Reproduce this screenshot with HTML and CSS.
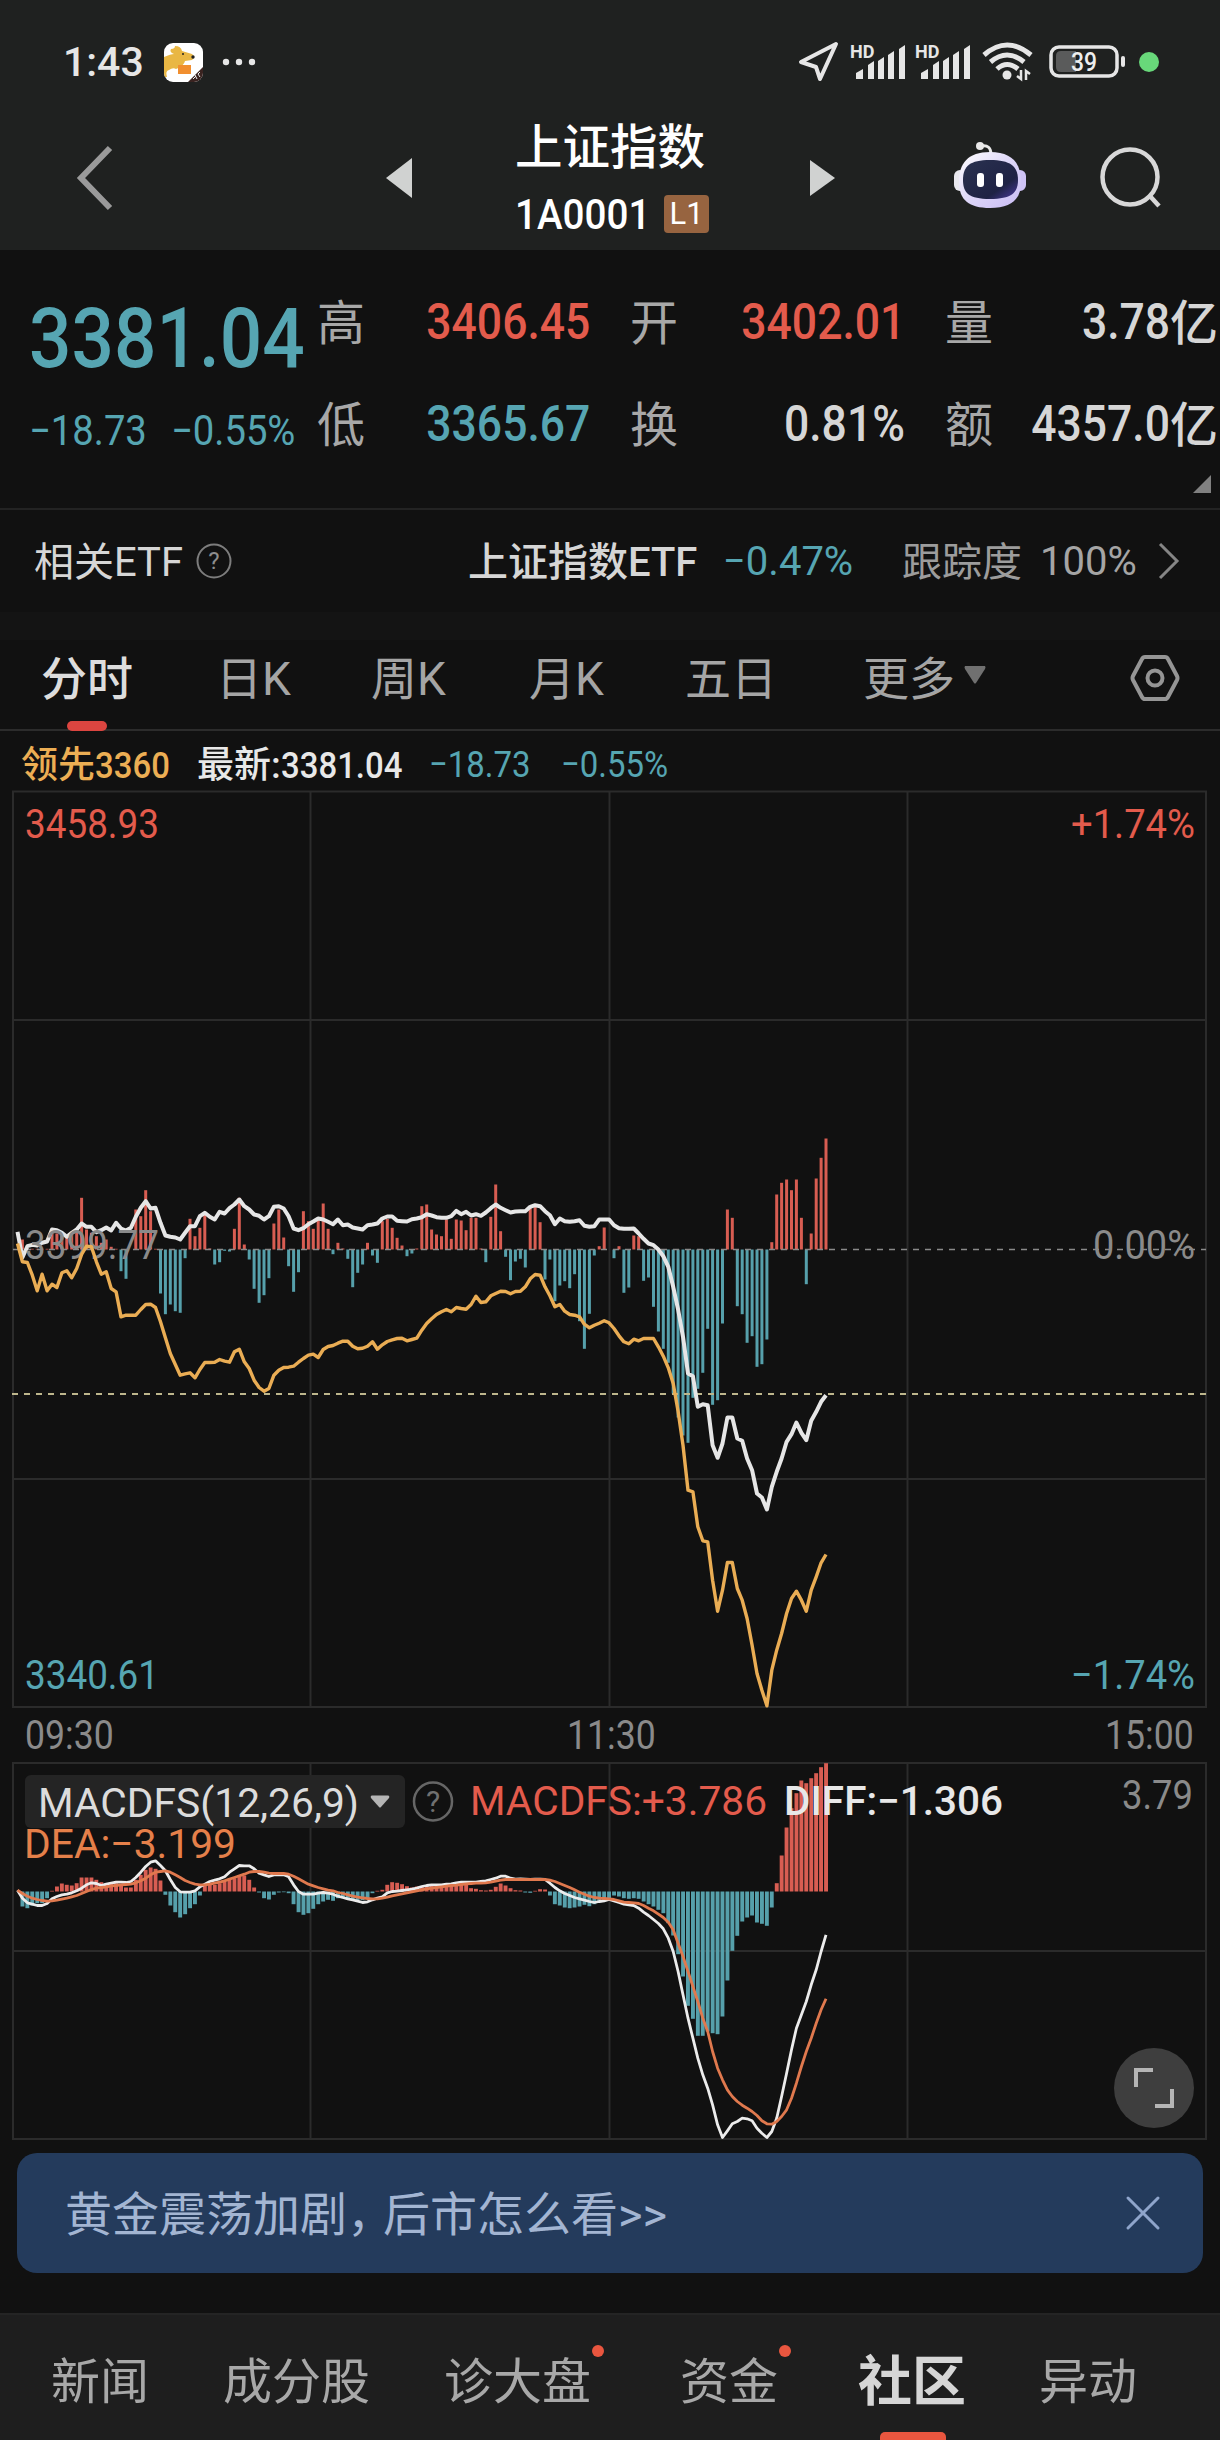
FILE: index.html
```html
<!DOCTYPE html>
<html lang="zh-CN">
  <head>
    <meta charset="UTF-8" />
    <meta name="viewport" content="width=device-width, initial-scale=1.0" />
    <title>上证指数</title>
    <link rel="stylesheet" href="styles.css">
  </head>
  <body>
    <header class="header">
      <div class="status">
        <span class="time">1:43</span>
        <svg class="app-icon" width="39" height="39" viewBox="0 0 39 39">
          <defs><clipPath id="appClip"><rect width="39" height="39" rx="9" /></clipPath></defs>
          <g clip-path="url(#appClip)">
            <rect width="39" height="39" fill="#fff" />
            <path d="M0 14 Q7 11 10 11 Q5 9 7 6 Q11 6 11 3 Q17 3 18 8 L28 11 Q32 14 28 17 L21 18 Q20 23 12 26 Q9 24 5 27 Q1 28 3 34 L0 34 Z" fill="#e9b744" />
            <circle cx="19" cy="11" r="1" fill="#222" />
            <circle cx="29" cy="14" r="1.7" fill="#222" />
            <rect x="14" y="22" width="13" height="9" fill="#f18f2f" />
            <path d="M39 24 L24 39 H39 Z" fill="#3a2320" />
            <path d="M29 36 l3-3 m1 3 l-2-4 m3-1 l2 3 m0-5 l-2 2" stroke="#eee" stroke-width="1" fill="none" />
          </g>
        </svg>
        <svg class="dots" width="34" height="8" viewBox="0 0 34 8" fill="#e6e6e6">
          <circle cx="4" cy="4" r="3.2" /><circle cx="17" cy="4" r="3.2" /><circle cx="30" cy="4" r="3.2" />
        </svg>

        <svg class="location" width="42" height="42" viewBox="0 0 42 42" fill="none" stroke="#e6e6e6" stroke-width="4" stroke-linejoin="round">
          <path d="M38 3 L3 21 L18 26 L22 38 Z" />
        </svg>
        <svg class="signal" width="56" height="38" viewBox="0 0 56 38" fill="#e6e6e6">
          <text x="0" y="15" class="hd">HD</text>
          <path d="M6 36v-6l7-4v10z M18 36V22l6-4v18z M28 36V18l6-4v22z M38 36V12l6-4v28z M49 36V6l6-4v34z" />
        </svg>
        <svg class="signal" width="56" height="38" viewBox="0 0 56 38" fill="#e6e6e6">
          <text x="0" y="15" class="hd">HD</text>
          <path d="M6 36v-6l7-4v10z M18 36V22l6-4v18z M28 36V18l6-4v22z M38 36V12l6-4v28z M49 36V6l6-4v34z" />
        </svg>
        <svg class="wifi" width="52" height="40" viewBox="0 0 52 40" fill="none" stroke="#e6e6e6" stroke-width="5">
          <path d="M2 13 Q25 -7 49 13 M8.500 20 Q25 6 42 20 M15 27 Q25 18 36 27" />
          <circle cx="25" cy="33" r="4.500" fill="#e6e6e6" stroke="none" />
          <path d="M35 34 l4 3 v-9 M48 32 l-4 -3 v9" stroke-width="2.500" />
        </svg>
        <svg class="battery" width="78" height="34" viewBox="0 0 78 34">
          <rect x="2" y="2" width="66" height="29" rx="8" fill="none" stroke="#e6e6e6" stroke-width="3.500" />
          <path d="M12 6 H27 V27 H12 Q7 27 7 22 V11 Q7 6 12 6Z" fill="#5a5b5b" />
          <rect x="72" y="11" width="4" height="11" rx="2" fill="#e6e6e6" />
          <text x="22" y="25.500" class="level" textLength="26" lengthAdjust="spacingAndGlyphs">39</text>
        </svg>
        <span class="privacy-dot"></span>
      </div>

      <div class="nav">
        <svg class="back" width="38" height="66" viewBox="0 0 38 66" fill="none" stroke="#9a9a9a" stroke-width="6">
          <path d="M34 3 L5 33 L34 63" />
        </svg>
        <svg class="prev" width="26" height="40" viewBox="0 0 26 40"><path d="M26 0 V40 L0 20Z" fill="#d0d2d1" /></svg>
        <div class="title">
          <h1>上证指数</h1>
          <div class="code"><span class="num code-num">1A0001</span><span class="badge">L1</span></div>
        </div>
        <svg class="next" width="25" height="36" viewBox="0 0 25 36"><path d="M0 0 V36 L25 18Z" fill="#d0d2d1" /></svg>
        <svg class="robot" width="72" height="68" viewBox="0 0 72 68">
          <defs>
            <linearGradient id="shell" x1="0" y1="0" x2="1" y2="1">
              <stop offset="0" stop-color="#ffffff" /><stop offset=".5" stop-color="#ddd6f8" /><stop offset="1" stop-color="#c9bcf4" />
            </linearGradient>
            <linearGradient id="visor" x1="0" y1="0" x2="1" y2="1">
              <stop offset="0" stop-color="#2a3150" /><stop offset=".7" stop-color="#1f2344" /><stop offset="1" stop-color="#4c3ba0" />
            </linearGradient>
          </defs>
          <path d="M27 5 Q37 3 37 14" fill="none" stroke="#e9e9e9" stroke-width="3" />
          <circle cx="26" cy="5" r="4" fill="#e9e9e9" />
          <rect x="0" y="29" width="12" height="21" rx="6" fill="#e8e8ee" />
          <rect x="60" y="29" width="12" height="21" rx="6" fill="#cfc3f6" />
          <path d="M36 11 C58 11 67 22 67 41 C67 59 57 67 36 67 C15 67 5 59 5 41 C5 22 14 11 36 11Z" fill="url(#shell)" />
          <path d="M36 19 C56 19 64 25 64 39 C64 52 57 58 36 58 C15 58 9 52 9 39 C9 25 16 19 36 19Z" fill="url(#visor)" />
          <rect x="23" y="32" width="7" height="14" rx="3" fill="#fff" />
          <rect x="42" y="32" width="7" height="14" rx="3" fill="#fff" />
        </svg>
        <svg class="search" width="62" height="62" viewBox="0 0 62 62" fill="none" stroke="#d8d8d8" stroke-width="4.500">
          <circle cx="30" cy="30" r="27.500" /><path d="M49 48 L59 59" />
        </svg>
      </div>
    </header>

    <section class="quote">
      <div class="last">
        <div class="num price">3381.04</div>
        <div class="change"><span class="num">−18.73</span><span class="num">−0.55%</span></div>
      </div>
      <div class="stats">
        <div class="stat"><label>高</label><span class="num up">3406.45</span></div>
        <div class="stat"><label>开</label><span class="num up">3402.01</span></div>
        <div class="stat"><label>量</label><span class="num">3.78</span><i>亿</i></div>
        <div class="stat"><label>低</label><span class="num down">3365.67</span></div>
        <div class="stat"><label>换</label><span class="num">0.81%</span></div>
        <div class="stat"><label>额</label><span class="num">4357.0</span><i>亿</i></div>
      </div>
      <span class="corner"></span>
    </section>

    <section class="etf">
      <span class="etf-label">相关ETF</span>
      <svg class="help" width="36" height="36" viewBox="0 0 36 36" fill="none" stroke="#7d7d7d" stroke-width="2">
        <circle cx="18" cy="18" r="16.500" />
        <text x="18" y="26" text-anchor="middle" class="help-text">?</text>
      </svg>
      <span class="etf-name">上证指数ETF</span>
      <span class="etf-change">−0.47%</span>
      <span class="etf-track">跟踪度</span>
      <span class="etf-percent">100%</span>
      <svg class="more" width="22" height="38" viewBox="0 0 22 38" fill="none" stroke="#858585" stroke-width="3"><path d="M2 2 L19 19 L2 36" /></svg>
    </section>

    <nav class="periods">
      <span class="period active">分时</span>
      <span class="period">日K</span>
      <span class="period">周K</span>
      <span class="period">月K</span>
      <span class="period">五日</span>
      <span class="period">更多</span>
      <svg class="caret" width="22" height="18" viewBox="0 0 22 18"><path d="M1 0 H21 Q22 1 21 3 L12 17 Q11 18 10 17 L1 3 Q0 1 1 0Z" fill="#707070" /></svg>
      <svg class="setting" width="50" height="48" viewBox="0 0 50 48" fill="none" stroke="#959595" stroke-width="4">
        <path d="M15 3 H35 Q37 3 38 5 L47 22 Q48 24 47 26 L38 43 Q37 45 35 45 H15 Q13 45 12 43 L3 26 Q2 24 3 22 L12 5 Q13 3 15 3Z" />
        <circle cx="25" cy="24" r="7.500" />
      </svg>
    </nav>

    <div class="legend">
      <span class="lead">领先<b class="num">3360</b></span>
      <span class="latest">最新:<b class="num">3381.04</b></span>
      <span class="num down">−18.73</span>
      <span class="num down">−0.55%</span>
    </div>

    <svg class="chart" id="minuteChart" width="1220" height="918" viewBox="0 790 1220 918">
      <path class="grid" d="M13 791.500H1206V1707H13Z M13 1020H1206 M13 1479H1206 M310.500 791V1707 M609.500 791V1707 M907.500 791V1707" />
      <g id="minuteBars"></g>
      <path class="zero-line" d="M13 1249.500H1206" />
      <path class="last-line" d="M12 1394H1206" />
      <polyline class="line-price" id="priceLine" />
      <g class="axis">
        <text class="up" x="25" y="838" textLength="134">3458.93</text>
        <text class="up" x="1071" y="838" textLength="124">+1.74%</text>
        <text class="mid" x="25" y="1259" textLength="134">3399.77</text>
        <text class="mid" x="1093" y="1259" textLength="102">0.00%</text>
        <text class="down" x="25" y="1689" textLength="134">3340.61</text>
        <text class="down" x="1071" y="1689" textLength="124">−1.74%</text>
      </g>
      <polyline class="line-lead" id="leadLine" />
    </svg>

    <div class="times"><span class="num">09:30</span><span class="num">11:30</span><span class="num">15:00</span></div>

    <div class="macd">
      <svg class="chart" width="1220" height="378" viewBox="0 1762 1220 378">
        <path class="grid" d="M13 1763H1206V2139H13Z M13 1951H1206 M310.500 1763V2139 M609.500 1763V2139 M907.500 1763V2139" />
        <rect x="25" y="1775" width="380" height="53" rx="6" class="select" />
        <g id="macdBars"></g>
        <polyline class="line-diff" id="diffLine" />
        <polyline class="line-dea" id="deaLine" />
        <g class="axis">
          <text x="38" y="1817" class="select-text" textLength="321">MACDFS(12,26,9)</text>
          <path d="M372 1795.500 H388 Q390 1796 389 1798 L381 1807 Q380 1808 379 1807 L371 1798 Q370 1796 372 1795.500Z" fill="#b5b5b5" />
          <circle cx="433" cy="1801.500" r="19" fill="none" stroke="#666" stroke-width="2.500" />
          <text x="433" y="1812" text-anchor="middle" class="macd-help">?</text>
          <text x="470" y="1815" class="up" textLength="297">MACDFS:+3.786</text>
          <text x="784" y="1815" class="diff" textLength="219">DIFF:−1.306</text>
          <text x="24" y="1858" class="dea" textLength="212">DEA:−3.199</text>
          <text x="1122" y="1809" class="mid" textLength="71">3.79</text>
        </g>
      </svg>
      <button class="fullscreen">
        <svg width="44" height="44" viewBox="0 0 44 44" fill="none" stroke="#b5b5b5" stroke-width="4"><path d="M4 21 V4 H21 M40 23 V40 H23" /></svg>
      </button>
    </div>

    <div class="banner">
      <span>黄金震荡加剧<span class="comma">，</span>后市怎么看&gt;&gt;</span>
      <svg width="36" height="36" viewBox="0 0 36 36" fill="none" stroke="#8fa5cb" stroke-width="3" stroke-linecap="round"><path d="M3 3 L33 33 M33 3 L3 33" /></svg>
    </div>

    <nav class="bottom">
      <span>新闻</span>
      <span>成分股</span>
      <span class="dot">诊大盘</span>
      <span class="dot">资金</span>
      <span class="current">社区</span>
      <span>异动</span>
    </nav>

    <script>
      // One value per minute from 09:30, offset from the zero line (3 units = 1px)
      const force = [
        0, 30, 4, 2, 2, 2, 2, 50, 48, 40, 40, 45, 55, 155, 60, 50, 40, 20, 30, 8,
        2, -65, -88, 0, 120, 100, 178, 115, 2, -132, -194, -165, -185, -190, -26, 92, 40, 65, 105, 3,
        -45, -38, -4, -6, 62, 155, 15, -30, -118, -160, -137, -86, 78, 120, 36, -50, -127, -68, 115, 85,
        62, 95, 138, 62, -14, 20, 3, -28, -113, -70, -45, 20, -18, -40, 85, 92, 65, 35, 12, -20,
        -12, 3, 130, 135, 60, 45, 40, 90, 32, 90, 87, 58, 95, 95, 3, -38, 98, 195, 55, -22,
        -92, -36, -28, -54, 125, 128, 82, -90, -30, -155, -108, -95, -116, -74, -215, -298, -193, -18, 10, 66,
        0, -26, 10, -130, -114, 42, 40, -94, -84, -172, -246, -298, -340, -432, -504, -558, -580, -445, -418, -370,
        -238, -466, -452, -222, 120, 95, -170, -194, -280, -260, -352, -344, -270, 22, 165, 200, 210, 178, 210, 95,
        -104, 48, 213, 275, 333
      ];
      const price = [
        53, -24, 10, 14, 12, 20, 24, 60, 58, 50, 38, 50, 60, 78, 68, 68, 52, 58, 66, 57,
        80, 63, 57, 65, 98, 125, 145, 123, 125, 80, 42, 38, 36, 30, 50, 70, 70, 100, 110, 98,
        90, 113, 108, 124, 135, 150, 130, 120, 105, 101, 90, 100, 128, 130, 123, 100, 63, 58, 64, 76,
        84, 93, 90, 83, 76, 90, 73, 75, 66, 63, 60, 73, 75, 78, 93, 99, 99, 86, 85, 84,
        91, 93, 97, 106, 102, 97, 95, 95, 100, 116, 106, 113, 102, 106, 101, 111, 124, 135, 125, 118,
        111, 114, 115, 115, 128, 133, 130, 115, 103, 76, 93, 85, 83, 85, 88, 71, 68, 70, 90, 90,
        90, 73, 64, 62, 62, 63, 48, 32, 18, 13, 0, -20, -52, -112, -180, -262, -372, -380, -472, -464,
        -467, -587, -625, -582, -504, -504, -567, -574, -627, -662, -732, -744, -780, -712, -667, -627, -577, -554, -519, -550,
        -572, -514, -487, -457, -437
      ];
      const lead = [
        18, -37, -39, -77, -124, -74, -124, -104, -114, -70, -64, -85, -57, -15, 10, 8, -37, -74, -67, -117,
        -127, -202, -197, -197, -197, -180, -165, -164, -174, -217, -265, -312, -345, -377, -373, -370, -385, -360, -339, -339,
        -338, -330, -335, -338, -307, -299, -337, -357, -392, -414, -425, -417, -377, -362, -354, -353, -350, -338, -327, -317,
        -314, -324, -300, -291, -288, -281, -275, -275, -290, -298, -296, -290, -277, -299, -286, -276, -271, -267, -266, -274,
        -270, -266, -242, -222, -208, -195, -187, -180, -187, -174, -177, -179, -165, -140, -159, -157, -139, -132, -125, -126,
        -133, -126, -125, -112, -88, -75, -77, -112, -139, -172, -165, -185, -195, -197, -202, -224, -235, -227, -221, -214,
        -220, -237, -259, -277, -283, -269, -274, -267, -267, -267, -292, -320, -355, -402, -485, -587, -722, -727, -832, -874,
        -877, -992, -1085, -1022, -939, -939, -1017, -1052, -1107, -1187, -1272, -1322, -1369, -1262, -1202, -1152, -1092, -1047, -1025, -1052,
        -1085, -1022, -982, -940, -915
      ];
      const macd = [
        0, -45, -50, -42, -35, -35, -20, 2, 15, 24, 20, 18, 25, 42, 42, 42, 35, 28, 25, 25,
        25, 22, 12, 12, 35, 50, 65, 72, 68, 33, -10, -42, -62, -78, -68, -50, -38, -12, 20, 22,
        20, 25, 30, 38, 40, 45, 48, 35, 12, -3, -20, -24, -10, -3, -2, -5, -38, -62, -70, -65,
        -52, -38, -30, -25, -28, -20, -20, -20, -24, -26, -26, -20, -5, 2, 5, 20, 28, 26, 22, 16,
        12, 15, 16, 18, 20, 20, 18, 20, 22, 24, 24, 20, 10, 8, 4, 3, 5, 14, 24, 18,
        10, 4, 3, -3, -4, 2, 7, 6, -12, -38, -42, -48, -50, -48, -45, -40, -44, -38, -30, -28,
        -24, -12, -15, -20, -22, -20, -22, -30, -38, -45, -55, -65, -95, -132, -188, -255, -343, -382, -433, -433,
        -420, -425, -428, -375, -267, -178, -133, -90, -78, -72, -93, -97, -103, -48, 25, 108, 192, 250, 295, 333,
        325, 340, 355, 373, 385
      ];
      const diff = [
        4, -20, -34, -38, -42, -42, -36, -22, -15, -10, -8, -4, 2, 10, 20, 26, 24, 18, 22, 25,
        28, 28, 27, 30, 42, 58, 75, 88, 92, 78, 62, 36, 12, -1, -2, -2, 2, 14, 22, 30,
        34, 38, 44, 58, 68, 78, 77, 77, 68, 55, 50, 45, 50, 50, 50, 44, 20, 0, -8, -8,
        -8, -5, -3, -5, -8, -14, -18, -22, -25, -29, -33, -31, -25, -20, -16, -4, 0, 1, 3, 5,
        7, 10, 15, 18, 20, 20, 20, 22, 23, 26, 28, 28, 28, 28, 30, 32, 36, 40, 46, 46,
        40, 37, 38, 37, 36, 37, 37, 36, 25, 12, 2, -6, -12, -18, -22, -26, -30, -33, -30, -28,
        -24, -28, -33, -38, -40, -42, -50, -62, -72, -84, -96, -112, -140, -180, -240, -310, -380, -440, -500, -550,
        -590, -640, -700, -738, -718, -697, -690, -680, -682, -688, -710, -725, -738, -720, -680, -615, -545, -475, -410, -370,
        -330, -280, -235, -180, -130
      ];
      const dea = [
        4, -6, -14, -20, -24, -27, -29, -28, -26, -23, -20, -16, -12, -6, 0, 6, 10, 12, 14, 17,
        18, 20, 21, 22, 26, 32, 40, 50, 58, 60, 62, 58, 50, 42, 33, 27, 22, 20, 20, 22,
        25, 28, 32, 37, 42, 47, 52, 58, 60, 60, 58, 55, 54, 54, 54, 52, 46, 38, 30, 22,
        17, 12, 8, 4, 2, -3, -6, -10, -14, -17, -19, -21, -22, -22, -20, -17, -13, -10, -7, -4,
        -1, 2, 5, 8, 10, 12, 14, 16, 18, 19, 21, 23, 24, 25, 25, 26, 28, 31, 34, 36,
        36, 36, 36, 36, 36, 36, 36, 36, 34, 30, 24, 18, 12, 5, -2, -8, -14, -18, -20, -21,
        -22, -24, -28, -32, -33, -34, -36, -42, -50, -58, -68, -78, -92, -115, -155, -195, -240, -285, -330, -380,
        -420, -480, -530, -565, -595, -615, -630, -641, -650, -660, -672, -688, -697, -698, -690, -675, -655, -620, -575, -525,
        -480, -440, -395, -355, -322
      ];

      const x = (i) => 17.5 + i * 4.93;

      function drawLine(id, data, zero) {
        document
          .getElementById(id)
          .setAttribute("points", data.map((v, i) => `${x(i).toFixed(1)},${(zero - v / 3).toFixed(1)}`).join(" "));
      }

      function drawBars(id, data, zero, width) {
        document.getElementById(id).innerHTML = data
          .map((v, i) => {
            const h = Math.abs(v) / 3;
            const y = v > 0 ? zero - h : zero;
            return `<rect class="${v > 0 ? "bar-up" : "bar-down"}" x="${(x(i) - width / 2).toFixed(1)}" y="${y.toFixed(1)}" width="${width}" height="${h.toFixed(1)}" />`;
          })
          .join("");
      }

      drawBars("minuteBars", force, 1249.5, 3);
      drawLine("leadLine", lead, 1249.5);
      drawLine("priceLine", price, 1249.5);
      drawBars("macdBars", macd, 1891.5, 3.9);
      drawLine("diffLine", diff, 1891.5);
      drawLine("deaLine", dea, 1891.5);

      // Labels keep their slot width whatever the font gives
      document.querySelectorAll("text[textLength]").forEach((t) => {
        t.setAttribute("lengthAdjust", "spacingAndGlyphs");
      });
    </script>
  </body>
</html>
```

FILE: styles.css
```css
* {
  box-sizing: border-box;
}
body {
  margin: 0;
  width: 1220px;
  height: 2440px;
  overflow: hidden;
  background: #111;
  color: #d6d6d6;
  font-family: Roboto, "Noto Sans CJK SC", sans-serif;
  display: flex;
  flex-direction: column;
}
body > * {
  flex-shrink: 0;
}
svg {
  display: block;
  flex-shrink: 0;
}
/* narrow figures */
.num {
  display: inline-block;
  transform: scaleX(0.89);
  transform-origin: left center;
  font-weight: 500;
}
.up {
  color: #e35b4c;
  fill: #e35b4c;
}
.down {
  color: #56a5b2;
  fill: #56a5b2;
}

/* header */
.header {
  height: 250px;
  background: #1f2120;
}
.status {
  display: flex;
  align-items: center;
  height: 124px;
  padding-left: 63px;
}
.time {
  width: 101px;
  font-size: 41px;
  font-weight: 500;
  color: #e6e6e6;
}
.dots {
  margin-left: 19px;
}
.location {
  margin-left: 542px;
}
.signal {
  margin-left: 9px;
  overflow: visible;
}
.location + .signal {
  margin-left: 10px;
}
.hd {
  font-size: 18px;
  font-weight: 700;
}
.wifi {
  margin-left: 11px;
}
.battery {
  margin-left: 15px;
}
.level {
  font-size: 25px;
  font-weight: 500;
  fill: #eee;
}
.privacy-dot {
  width: 20px;
  height: 20px;
  margin-left: 12px;
  border-radius: 50%;
  background: #68d87a;
}
.nav {
  display: flex;
  align-items: flex-start;
  padding-left: 76px;
}
.back {
  margin-top: 21px;
}
.prev {
  margin: 34px 0 0 272px;
}
.title {
  width: 196px;
  margin: -6px 0 0 103px;
}
.title h1 {
  margin: 0;
  font-size: 47.5px;
  font-weight: 500;
  line-height: 60px;
  color: #fff;
  white-space: nowrap;
}
.code {
  display: flex;
  align-items: center;
  height: 40px;
  margin-top: 16px;
}
.code-num {
  width: 149px;
  font-size: 42px;
  color: #fff;
  transform: scaleX(0.92);
}
.badge {
  width: 45px;
  height: 38px;
  border-radius: 4px;
  background: #976440;
  color: #fff;
  font-size: 31px;
  line-height: 38px;
  text-align: center;
}
.next {
  margin: 36px 0 0 99px;
}
.robot {
  margin: 17px 0 0 119px;
}
.search {
  margin: 23px 0 0 74px;
}

/* quote */
.quote {
  position: relative;
  display: flex;
  height: 260px;
  padding-top: 21px;
  border-bottom: 2px solid #232323;
}
.last {
  width: 317px;
  padding-left: 29px;
  color: #56a5b2;
}
.price {
  font-size: 84px;
  line-height: 135px;
}
.change {
  display: flex;
  font-size: 42px;
  line-height: 50px;
}
.change .num {
  width: 142px;
  flex-shrink: 0;
  font-weight: 400;
  transform: scaleX(0.91);
}
.stats {
  display: grid;
  grid-template-columns: 273px 275px 271px;
  column-gap: 40px;
  grid-auto-rows: 102px;
}
.stat {
  display: flex;
  align-items: center;
  font-size: 48px;
}
.stat label {
  margin-right: auto;
  padding-bottom: 6px;
  color: #a8a8a8;
}
.stat .num {
  font-size: 50px;
  transform-origin: right center;
}
.stat i {
  font-style: normal;
  width: 46px;
  padding-bottom: 6px;
  font-weight: 500;
}
.corner {
  position: absolute;
  right: 9px;
  top: 225px;
  width: 18px;
  height: 18px;
  background: #808080;
  clip-path: polygon(100% 0, 100% 100%, 0 100%);
}

/* related etf */
.etf {
  display: flex;
  align-items: center;
  height: 102px;
  padding-left: 34px;
  font-size: 40px;
  white-space: nowrap;
}
.etf-label {
  width: 162px;
  padding-bottom: 4px;
}
.help-text {
  font-size: 24px;
  fill: #8d8d8d;
  stroke: none;
}
.etf-name {
  width: 255px;
  margin-left: 236px;
  padding-bottom: 4px;
  font-weight: 500;
}
.etf-change {
  width: 179px;
  color: #56a5b2;
}
.etf-track {
  width: 138px;
  padding-bottom: 4px;
  color: #9c9c9c;
}
.etf-percent {
  width: 118px;
  color: #a5a5a5;
}

/* period tabs */
.periods {
  display: grid;
  grid-template-columns: 175px 155px 158px 156px 178px 101px 166px auto;
  align-items: center;
  height: 119px;
  padding: 0 0 19px 41px;
  border-top: 28px solid #141414;
  border-bottom: 2px solid #2c2c2c;
}
.period {
  position: relative;
  font-size: 46px;
  color: #a5a5a5;
}
.period.active {
  font-weight: 500;
  color: #ddd;
}
.period.active::after {
  content: "";
  position: absolute;
  left: 26px;
  bottom: -23px;
  width: 40px;
  height: 10px;
  border-radius: 5px;
  background: #dc4540;
}
.setting {
  margin-top: 5px;
}

.legend {
  display: flex;
  align-items: center;
  height: 59px;
  padding: 7px 0 0 21px;
  font-size: 37px;
  font-weight: 500;
  white-space: nowrap;
}
.legend .num {
  font-weight: 400;
}
.lead {
  width: 176px;
  padding-bottom: 5px;
  color: #ecae54;
}
.latest {
  width: 232px;
  padding-bottom: 5px;
  color: #e8e8e8;
}
.legend > .num {
  width: 132px;
}
.legend .latest .num,
.legend .lead .num {
  font-weight: 500;
}

/* charts */
.grid {
  fill: none;
  stroke: #2b2b2b;
  stroke-width: 2;
}
.zero-line {
  stroke: #8a8a8a;
  stroke-width: 1.5;
  stroke-dasharray: 6 6;
}
.last-line {
  stroke: #bdb68c;
  stroke-width: 2;
  stroke-dasharray: 6 6;
}
.bar-up {
  fill: #d85d52;
}
.bar-down {
  fill: #56a0ab;
}
polyline {
  fill: none;
  stroke-linejoin: round;
}
.line-price {
  stroke: #e6e6e6;
  stroke-width: 4;
}
.line-lead {
  stroke: #eaad54;
  stroke-width: 3.4;
}
.line-diff {
  stroke: #ececec;
  stroke-width: 2.8;
}
.line-dea {
  stroke: #e0794e;
  stroke-width: 2.8;
}
.axis {
  font-size: 40px;
}
.axis .mid {
  fill: #8a8a8a;
}
.times {
  display: grid;
  grid-template-columns: 542px 538px auto;
  align-items: center;
  height: 54px;
  padding-left: 25px;
  font-size: 40px;
  color: #8a8a8a;
}
.times .num {
  font-weight: 400;
}
.macd {
  position: relative;
  height: 378px;
}
.select {
  fill: #242424;
}
.select-text {
  fill: #dcdcdc;
}
.macd-help {
  font-size: 30px;
  fill: #707070;
}
.diff {
  fill: #e8e8e8;
  font-weight: 500;
}
.dea {
  fill: #e5804a;
}
.fullscreen {
  position: absolute;
  right: 26px;
  bottom: 12px;
  display: flex;
  align-items: center;
  justify-content: center;
  width: 80px;
  height: 80px;
  padding: 0;
  border: 0;
  border-radius: 50%;
  background: #3e3e3e;
}

.banner {
  display: flex;
  align-items: center;
  justify-content: space-between;
  height: 120px;
  margin: 13px 17px 0;
  padding: 0 42px 0 48px;
  border-radius: 20px;
  background: #243b5c;
  color: #a3b5d2;
  font-size: 47px;
}
.banner > span {
  padding-bottom: 6px;
}
.comma {
  margin-right: -11px;
}

/* bottom tabs */
.bottom {
  display: grid;
  grid-template-columns: 172px 221px 236px 178px 181px auto;
  align-items: center;
  height: 127px;
  margin-top: 40px;
  padding-left: 51px;
  border-top: 2px solid #242424;
  background: #1e1e1e;
  color: #a8a8a8;
  font-size: 49px;
}
.bottom span {
  position: relative;
  justify-self: start;
}
.bottom .dot::after {
  content: "";
  position: absolute;
  right: -13px;
  top: 3px;
  width: 12px;
  height: 12px;
  border-radius: 50%;
  background: #e9563f;
}
.bottom .current {
  font-size: 54px;
  font-weight: 700;
  color: #d6d6d6;
}
.bottom .current::after {
  content: "";
  position: absolute;
  left: 22px;
  bottom: -29px;
  width: 66px;
  height: 14px;
  border-radius: 5px;
  background: #e9563f;
}
```
